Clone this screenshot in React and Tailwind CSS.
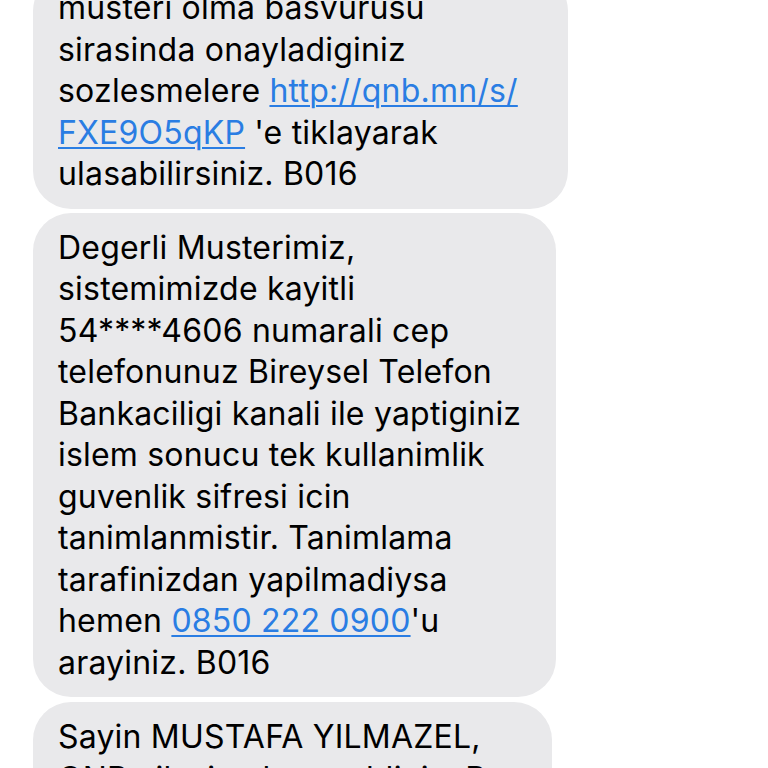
import React from "react";

const messages = [
  {
    width: "w-[535px]",
    offset: "-mt-[27px]",
    lines: [
      ["musteri olma basvurusu"],
      ["sirasinda onayladiginiz"],
      ["sozlesmelere ", { link: "http://qnb.mn/s/" }],
      [{ link: "FXE9O5qKP" }, " 'e tiklayarak"],
      ["ulasabilirsiniz. B016"],
    ],
  },
  {
    width: "w-[523px]",
    offset: "mt-[4px]",
    lines: [
      ["Degerli Musterimiz,"],
      ["sistemimizde kayitli"],
      ["54****4606 numarali cep"],
      ["telefonunuz Bireysel Telefon"],
      ["Bankaciligi kanali ile yaptiginiz"],
      ["islem sonucu tek kullanimlik"],
      ["guvenlik sifresi icin"],
      ["tanimlanmistir. Tanimlama"],
      ["tarafinizdan yapilmadiysa"],
      ["hemen ", { link: "0850 222 0900" }, "'u"],
      ["arayiniz. B016"],
    ],
  },
  {
    width: "w-[519px]",
    offset: "mt-[5px]",
    lines: [
      ["Sayin MUSTAFA YILMAZEL,"],
      ["QNB ailesine hos geldiniz. Bu"],
      ["mesaj bilgilendirme amaclidir."],
    ],
  },
];

function Bubble({ msg }) {
  return (
    <div className={`${msg.width} ${msg.offset} ml-[33px] bg-[#e9e9eb] rounded-[38px] pl-[25px] pr-4 py-[14px]`}>
      {msg.lines.map((line, i) => (
        <div key={i} className="whitespace-nowrap leading-[41.5px]">
          {line.map((part, j) =>
            typeof part === "string" ? (
              <span key={j}>{part}</span>
            ) : (
              <span key={j} className="text-[#2a7de3] underline decoration-[1.5px] underline-offset-[3px]">
                {part.link}
              </span>
            )
          )}
        </div>
      ))}
    </div>
  );
}

export default function App() {
  return (
    <div
      className="w-[768px] h-[768px] overflow-hidden bg-white text-black text-[32px] tracking-[0.2px]"
      style={{ fontFamily: "Inter, 'Noto Sans', sans-serif" }}
    >
      <div className="flex flex-col">
        {messages.map((m, i) => (
          <Bubble key={i} msg={m} />
        ))}
      </div>
    </div>
  );
}
